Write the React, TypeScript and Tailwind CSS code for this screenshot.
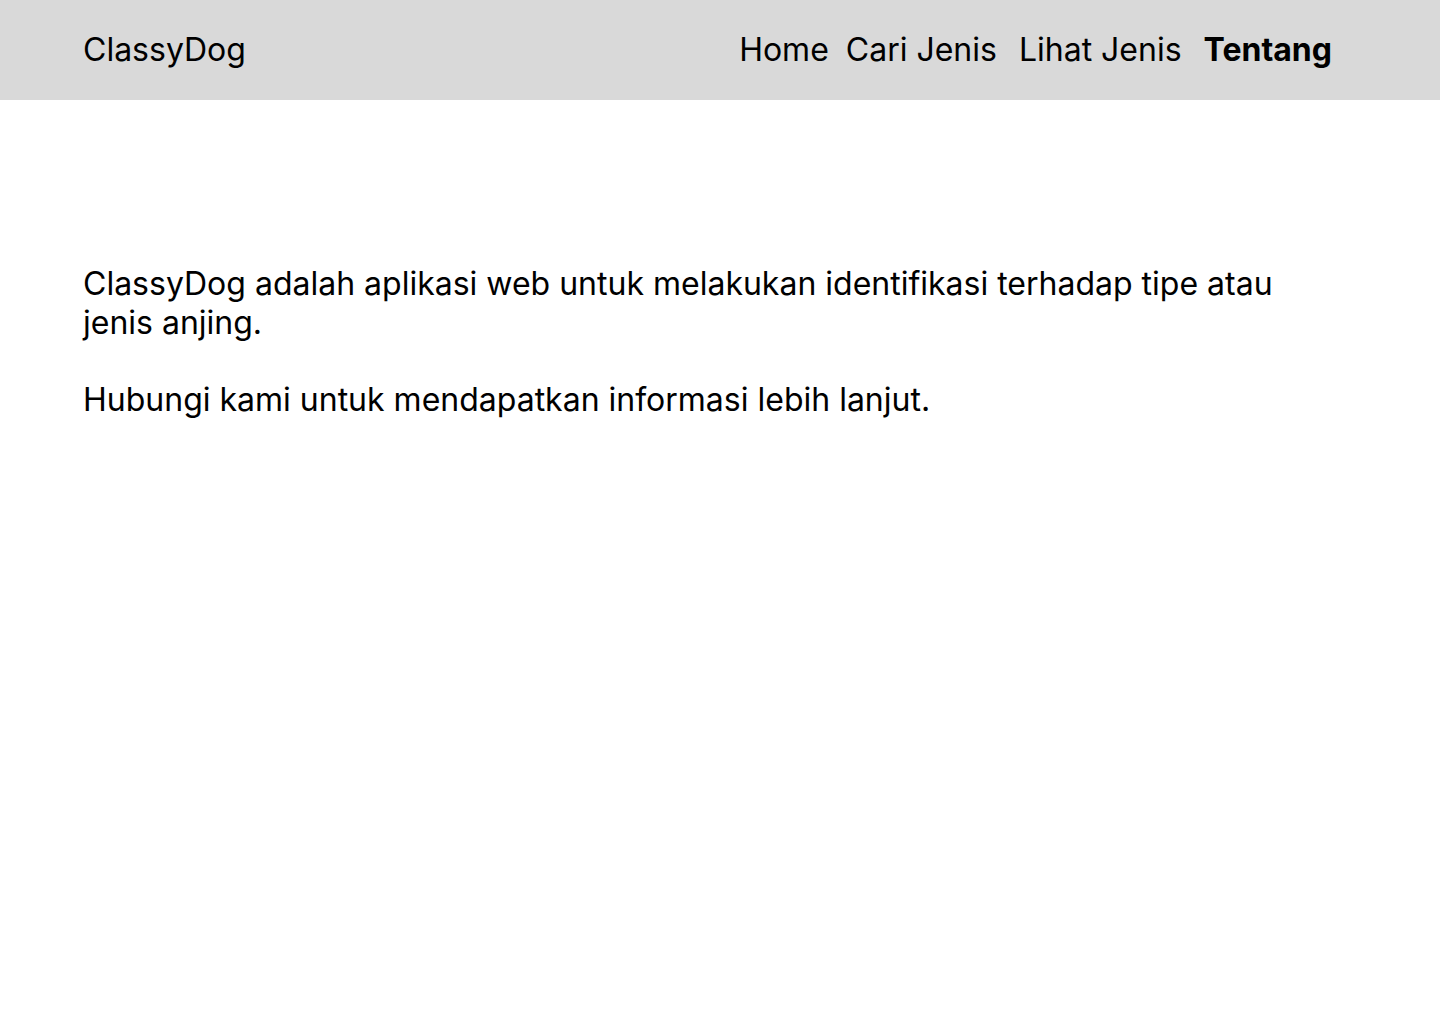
import React from "react";

export default function App() {
  return (
    <div className="min-h-[1024px] w-full bg-white text-black" style={{ fontFamily: "Inter, 'Noto Sans', sans-serif" }}>
      <header className="flex h-[100px] items-center justify-between bg-[#d9d9d9] pl-[83px] pr-[108px] pt-[1px] text-[32px] leading-[1.21]">
        <div>ClassyDog</div>
        <nav className="flex items-center">
          <a className="mr-[17px]">Home</a>
          <a className="mr-[22px]">Cari Jenis</a>
          <a className="mr-[22px]">Lihat Jenis</a>
          <a className="font-bold">Tentang</a>
        </nav>
      </header>
      <main className="pl-[83px] pt-[165px] text-[32px] leading-[1.21]">
        <div className="w-[1230px]">
          <p>ClassyDog adalah aplikasi web untuk melakukan identifikasi terhadap tipe atau jenis anjing.</p>
          <p className="mt-[39px]">Hubungi kami untuk mendapatkan informasi lebih lanjut.</p>
        </div>
      </main>
    </div>
  );
}
